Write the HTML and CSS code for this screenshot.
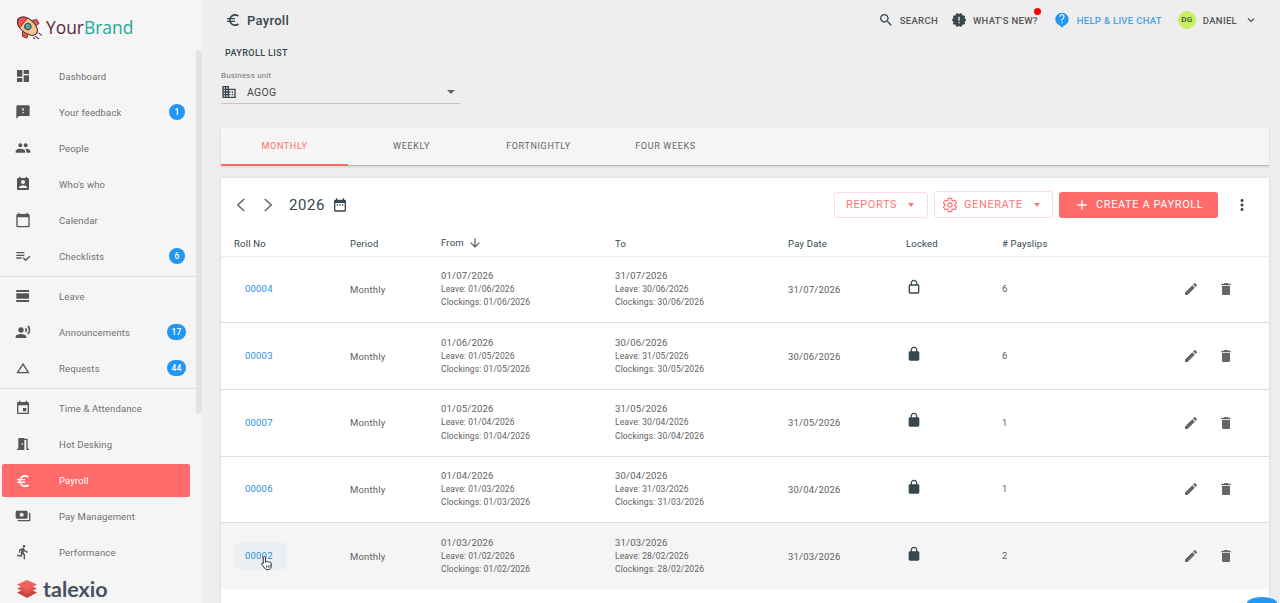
FILE: index.html
```html
<!DOCTYPE html>
<html lang="en">
<head>
    <meta charset="UTF-8">
    <meta name="viewport" content="width=device-width, initial-scale=1.0">
    <title>Payroll</title>
    <link rel="stylesheet" href="styles.css">
</head>
<body>

    <svg class="defs" xmlns="http://www.w3.org/2000/svg">
        <symbol id="i-dashboard" viewBox="0 0 24 24"><path d="M3 13h8V3H3v10zm0 8h8v-6H3v6zm10 0h8V11h-8v10zm0-18v6h8V3h-8z"/></symbol>
        <symbol id="i-feedback" viewBox="0 0 24 24"><path d="M20 2H4c-1.1 0-1.99.9-1.99 2L2 22l4-4h14c1.1 0 2-.9 2-2V4c0-1.1-.9-2-2-2zm-7 12h-2v-2h2v2zm0-4h-2V6h2v4z"/></symbol>
        <symbol id="i-people" viewBox="0 0 24 24"><path d="M16 11c1.66 0 2.99-1.34 2.99-3S17.66 5 16 5c-1.66 0-3 1.34-3 3s1.34 3 3 3zm-8 0c1.66 0 2.99-1.34 2.99-3S9.66 5 8 5C6.34 5 5 6.34 5 8s1.34 3 3 3zm0 2c-2.33 0-7 1.17-7 3.5V19h14v-2.5c0-2.33-4.67-3.5-7-3.5zm8 0c-.29 0-.62.02-.97.05 1.16.84 1.97 1.97 1.97 3.45V19h6v-2.5c0-2.33-4.67-3.5-7-3.5z"/></symbol>
        <symbol id="i-whos" viewBox="0 0 24 24"><path d="M19 3h-1V1h-2v2H8V1H6v2H5c-1.1 0-2 .9-2 2v14c0 1.1.9 2 2 2h14c1.1 0 2-.9 2-2V5c0-1.1-.9-2-2-2zm-7 3c1.66 0 3 1.34 3 3s-1.34 3-3 3-3-1.34-3-3 1.34-3 3-3zm6 12H6v-1c0-2 4-3.1 6-3.1s6 1.1 6 3.1v1z"/></symbol>
        <symbol id="i-calendar" viewBox="0 0 24 24"><path d="M20 3h-1V1h-2v2H7V1H5v2H4c-1.1 0-2 .9-2 2v16c0 1.1.9 2 2 2h16c1.1 0 2-.9 2-2V5c0-1.1-.9-2-2-2zm0 18H4V8h16v13z"/></symbol>
        <symbol id="i-checklist" viewBox="0 0 24 24"><path d="M14 10H2v2h12v-2zm0-4H2v2h12V6zM2 16h8v-2H2v2zm19.5-4.5L23 13l-6.99 7-4.51-4.5L13 14l3.01 3 5.49-5.5z"/></symbol>
        <symbol id="i-leave" viewBox="0 0 24 24"><path d="M2 21h19v-3H2v3zM20 8H3c-.55 0-1 .45-1 1v6c0 .55.45 1 1 1h17c.55 0 1-.45 1-1V9c0-.55-.45-1-1-1zM2 3v3h19V3H2z"/></symbol>
        <symbol id="i-voice" viewBox="0 0 24 24"><circle cx="9" cy="9" r="4"/><path d="M9 15c-2.67 0-8 1.34-8 4v2h16v-2c0-2.66-5.33-4-8-4zm7.76-9.64l-1.68 1.69c.84 1.18.84 2.71 0 3.89l1.68 1.69c2.02-2.02 2.02-5.07 0-7.27zM20.07 2l-1.63 1.63c2.77 3.02 2.77 7.56 0 10.74L20.07 16c3.9-3.89 3.91-9.95 0-14z"/></symbol>
        <symbol id="i-triangle" viewBox="0 0 24 24"><path d="M12 7.77L18.39 18H5.61L12 7.77M12 4L2 20h20L12 4z"/></symbol>
        <symbol id="i-event" viewBox="0 0 24 24"><path d="M17 12h-5v5h5v-5zM16 1v2H8V1H6v2H5c-1.11 0-1.99.9-1.99 2L3 19c0 1.1.89 2 2 2h14c1.1 0 2-.9 2-2V5c0-1.1-.9-2-2-2h-1V1h-2zm3 18H5V8h14v11z"/></symbol>
        <symbol id="i-door" viewBox="0 0 24 24"><path d="M14 6v15H3v-2h2V3h9v1h5v15h2v2h-4V6h-3zm-4 5v2h2v-2h-2z"/></symbol>
        <symbol id="i-euro" viewBox="0 0 24 24"><path d="M15 18.5c-2.51 0-4.68-1.42-5.76-3.5H15v-2H8.58c-.05-.33-.08-.66-.08-1s.03-.67.08-1H15V9H9.24C10.32 6.92 12.5 5.5 15 5.5c1.61 0 3.09.59 4.23 1.57L21 5.3C19.41 3.87 17.3 3 15 3c-3.92 0-7.24 2.51-8.48 6H3v2h3.06c-.04.33-.06.66-.06 1s.02.67.06 1H3v2h3.52c1.24 3.49 4.56 6 8.48 6 2.31 0 4.41-.87 6-2.3l-1.78-1.77c-1.13.98-2.6 1.57-4.22 1.57z"/></symbol>
        <symbol id="i-payments" viewBox="0 0 24 24"><path d="M19 14V6c0-1.1-.9-2-2-2H3c-1.1 0-2 .9-2 2v8c0 1.1.9 2 2 2h14c1.1 0 2-.9 2-2zm-9-1c-1.66 0-3-1.34-3-3s1.34-3 3-3 3 1.34 3 3-1.34 3-3 3zm13-6v11c0 1.1-.9 2-2 2H4v-2h17V7h2z"/></symbol>
        <symbol id="i-run" viewBox="0 0 24 24"><path d="M13.49 5.48c1.1 0 2-.9 2-2s-.9-2-2-2-2 .9-2 2 .9 2 2 2zm-3.6 13.9l1-4.4 2.1 2v6h2v-7.5l-2.1-2 .6-3c1.3 1.5 3.3 2.5 5.5 2.5v-2c-1.9 0-3.5-1-4.3-2.4l-1-1.6c-.4-.6-1-1-1.7-1-.3 0-.5.1-.8.1l-5.2 2.2v4.7h2v-3.4l1.8-.7-1.6 8.1-4.9-1-.4 2 7 1.4z"/></symbol>
        <symbol id="i-search" viewBox="0 0 24 24"><path d="M15.5 14h-.79l-.28-.27C15.41 12.59 16 11.11 16 9.5 16 5.91 13.09 3 9.5 3S3 5.91 3 9.5 5.91 16 9.5 16c1.61 0 3.09-.59 4.23-1.57l.27.28v.79l5 4.99L20.49 19l-4.99-5zm-6 0C7.01 14 5 11.99 5 9.5S7.01 5 9.5 5 14 7.01 14 9.5 11.99 14 9.5 14z"/></symbol>
        <symbol id="i-new" viewBox="0 0 24 24"><path d="M23 12l-2.44-2.78.34-3.68-3.61-.82-1.89-3.18L12 3 8.6 1.54 6.71 4.72l-3.61.81.34 3.68L1 12l2.44 2.78-.34 3.69 3.61.82 1.89 3.18L12 21l3.4 1.46 1.89-3.18 3.61-.82-.34-3.68L23 12zm-10 5h-2v-2h2v2zm0-4h-2V7h2v6z"/></symbol>
        <symbol id="i-help" viewBox="0 0 24 24"><path d="M12 1C6.48 1 2 5.48 2 11c0 4.6 3.1 8.5 7.4 9.6L12 23.5l2.6-2.9C18.900 19.500 22 15.600 22 11c0-5.520-4.480-10-10-10zm1 16h-2v-2h2v2zm2.070-7.750l-.9.920C13.450 10.900 13 11.500 13 13h-2v-.5c0-1.100.45-2.100 1.170-2.830l1.240-1.260c.37-.36.59-.86.59-1.410 0-1.100-.9-2-2-2s-2 .9-2 2H8c0-2.210 1.790-4 4-4s4 1.790 4 4c0 .88-.36 1.680-.93 2.250z"/></symbol>
        <symbol id="i-expand" viewBox="0 0 24 24"><path d="M7.41 8.59L12 13.17l4.59-4.58L18 10l-6 6-6-6z"/></symbol>
        <symbol id="i-business" viewBox="0 0 24 24"><path d="M12 7V3H2v18h20V7H12zM6 19H4v-2h2v2zm0-4H4v-2h2v2zm0-4H4V9h2v2zm0-4H4V5h2v2zm4 12H8v-2h2v2zm0-4H8v-2h2v2zm0-4H8V9h2v2zm0-4H8V5h2v2zm10 12h-8v-2h2v-2h-2v-2h2v-2h-2V9h8v10zm-2-8h-2v2h2v-2zm0 4h-2v2h2v-2z"/></symbol>
        <symbol id="i-gear" viewBox="0 0 24 24"><path fill="none" stroke="currentColor" stroke-width="1.8" d="M19.430 12.980c.04-.32.07-.64.07-.98 0-.34-.03-.66-.07-.98l2.110-1.650c.19-.15.24-.42.12-.64l-2-3.460c-.12-.22-.39-.3-.61-.22l-2.490 1c-.52-.4-1.080-.73-1.690-.98l-.38-2.650C14.460 2.180 14.250 2 14 2h-4c-.25 0-.46.18-.49.42l-.38 2.650c-.61.25-1.170.59-1.690.98l-2.490-1c-.23-.09-.49 0-.61.22l-2 3.460c-.13.22-.07.49.12.64l2.110 1.650c-.04.32-.07.65-.07.98 0 .33.03.66.07.98l-2.110 1.650c-.19.15-.24.42-.12.64l2 3.460c.12.22.39.3.61.22l2.490-1c.52.4 1.080.73 1.690.98l.38 2.650c.03.24.24.42.49.42h4c.25 0 .46-.18.49-.42l.38-2.650c.61-.25 1.170-.59 1.690-.98l2.490 1c.23.09.49 0 .61-.22l2-3.460c.12-.22.07-.49-.12-.64l-2.110-1.650z"/><circle cx="12" cy="12" r="3.200" fill="none" stroke="currentColor" stroke-width="1.800"/></symbol>
        <symbol id="i-add" viewBox="0 0 24 24"><path d="M19 13h-6v6h-2v-6H5v-2h6V5h2v6h6v2z"/></symbol>
        <symbol id="i-more" viewBox="0 0 24 24"><path d="M12 8c1.100 0 2-.9 2-2s-.9-2-2-2-2 .9-2 2 .9 2 2 2zm0 2c-1.100 0-2 .9-2 2s.9 2 2 2 2-.9 2-2-.9-2-2-2zm0 6c-1.100 0-2 .9-2 2s.9 2 2 2 2-.9 2-2-.9-2-2-2z"/></symbol>
        <symbol id="i-left" viewBox="0 0 24 24"><path d="M15.500 5.500L8.500 12l7 6.500" fill="none" stroke="currentColor" stroke-width="1.700"/></symbol>
        <symbol id="i-right" viewBox="0 0 24 24"><path d="M8.500 5.500l7 6.500-7 6.500" fill="none" stroke="currentColor" stroke-width="1.700"/></symbol>
        <symbol id="i-today" viewBox="0 0 24 24"><path d="M9 11H7v2h2v-2zm4 0h-2v2h2v-2zm4 0h-2v2h2v-2zm2-7h-1V2h-2v2H8V2H6v2H5c-1.110 0-1.990.9-1.990 2L3 20c0 1.100.89 2 2 2h14c1.100 0 2-.9 2-2V6c0-1.100-.9-2-2-2zm0 16H5V9h14v11z"/></symbol>
        <symbol id="i-down" viewBox="0 0 24 24"><path d="M20 12l-1.410-1.410L13 16.170V4h-2v12.170l-5.580-5.590L4 12l8 8 8-8z"/></symbol>
        <symbol id="i-lock" viewBox="0 0 24 24"><path d="M18 8h-1V6c0-2.760-2.240-5-5-5S7 3.240 7 6v2H6c-1.100 0-2 .9-2 2v10c0 1.100.9 2 2 2h12c1.100 0 2-.9 2-2V10c0-1.100-.9-2-2-2zm-2.900 0H8.900V6c0-1.710 1.390-3.100 3.100-3.100 1.710 0 3.100 1.390 3.100 3.100v2z"/></symbol>
        <symbol id="i-lock-open" viewBox="0 0 24 24"><path d="M18 8h-1V6c0-2.760-2.240-5-5-5S7 3.240 7 6v2H6c-1.100 0-2 .9-2 2v10c0 1.100.9 2 2 2h12c1.100 0 2-.9 2-2V10c0-1.100-.9-2-2-2zM8.900 6c0-1.710 1.390-3.100 3.100-3.100s3.100 1.390 3.100 3.100v2H8.900V6zM18 20H6V10h12v10z"/></symbol>
        <symbol id="i-edit" viewBox="0 0 24 24"><path d="M3 17.250V21h3.750L17.810 9.940l-3.750-3.750L3 17.250zM20.710 7.040c.39-.39.39-1.020 0-1.410l-2.340-2.340c-.39-.39-1.020-.39-1.410 0l-1.830 1.830 3.750 3.750 1.830-1.830z"/></symbol>
        <symbol id="i-delete" viewBox="0 0 24 24"><path d="M6 19c0 1.100.9 2 2 2h8c1.100 0 2-.9 2-2V7H6v12zM19 4h-3.500l-1-1h-5l-1 1H5v2h14V4z"/></symbol>
    </svg>

    <div class="app">
        <aside class="sidebar">
            <div class="brand">
                <svg class="rocket" viewBox="1 0 25 21.500">
                    <g transform="rotate(40 13 10)">
                        <path d="M12 4.500L15.500 0l4 1.500-1.500 4zM12 15.500l3.500 4.500 4-1.500-1.500-4z" fill="#e9574f" stroke="#5b2a3c" stroke-width=".7"/>
                        <ellipse cx="13" cy="10" rx="10.500" ry="6.200" fill="#f3c58e" stroke="#5b2a3c" stroke-width=".9"/>
                        <path d="M2.500 10C3.500 6.800 6 4.900 8.500 4.300v11.400C6 15.100 3.500 13.200 2.500 10z" fill="#e9574f" stroke="#5b2a3c" stroke-width=".7"/>
                        <circle cx="13.500" cy="10" r="2.800" fill="#3fb2a8" stroke="#5b2a3c" stroke-width=".9"/>
                    </g>
                    <path d="M20 19l4 3M23 16l3 2.500M18 20l2 1.500" stroke="#5b2a3c" stroke-width=".9"/>
                </svg>
                <span class="brand-name">Your<b>Brand</b></span>
            </div>

            <nav class="nav">
                <div class="nav-group">
                    <a class="nav-item"><svg class="nav-icon"><use href="#i-dashboard"/></svg><span>Dashboard</span></a>
                    <a class="nav-item"><svg class="nav-icon"><use href="#i-feedback"/></svg><span>Your feedback</span><em class="count">1</em></a>
                    <a class="nav-item"><svg class="nav-icon"><use href="#i-people"/></svg><span>People</span></a>
                    <a class="nav-item"><svg class="nav-icon"><use href="#i-whos"/></svg><span>Who's who</span></a>
                    <a class="nav-item"><svg class="nav-icon"><use href="#i-calendar"/></svg><span>Calendar</span></a>
                    <a class="nav-item"><svg class="nav-icon"><use href="#i-checklist"/></svg><span>Checklists</span><em class="count">6</em></a>
                </div>
                <div class="nav-group">
                    <a class="nav-item"><svg class="nav-icon"><use href="#i-leave"/></svg><span>Leave</span></a>
                    <a class="nav-item"><svg class="nav-icon"><use href="#i-voice"/></svg><span>Announcements</span><em class="count wide">17</em></a>
                    <a class="nav-item"><svg class="nav-icon"><use href="#i-triangle"/></svg><span>Requests</span><em class="count wide">44</em></a>
                </div>
                <div class="nav-group last">
                    <a class="nav-item"><svg class="nav-icon"><use href="#i-event"/></svg><span>Time &amp; Attendance</span></a>
                    <a class="nav-item"><svg class="nav-icon"><use href="#i-door"/></svg><span>Hot Desking</span></a>
                    <a class="nav-item active"><svg class="nav-icon"><use href="#i-euro"/></svg><span>Payroll</span></a>
                    <a class="nav-item"><svg class="nav-icon"><use href="#i-payments"/></svg><span>Pay Management</span></a>
                    <a class="nav-item"><svg class="nav-icon"><use href="#i-run"/></svg><span>Performance</span></a>
                </div>
            </nav>

            <div class="talexio">
                <svg class="talexio-mark" viewBox="0 0 20 18">
                    <path d="M10 8l10 4.500L10 18 0 12.500z" fill="#c9433f"/>
                    <path d="M10 4l10 4.500L10 14 0 8.500z" fill="#e2544f"/>
                    <path d="M10 0l10 4.500L10 10 0 4.500z" fill="#f0625d"/>
                </svg>
                <span>talexio</span>
            </div>
            <div class="nav-scrollbar"></div>
        </aside>

        <main class="main">
            <header class="topbar">
                <div class="page-title">
                    <svg class="title-icon"><use href="#i-euro"/></svg>
                    <h1>Payroll</h1>
                </div>
                <div class="top-actions">
                    <a class="top-link search"><svg><use href="#i-search"/></svg>SEARCH</a>
                    <a class="top-link news"><svg><use href="#i-new"/></svg>WHAT'S NEW?<i class="red-dot"></i></a>
                    <a class="top-link help"><svg><use href="#i-help"/></svg>HELP &amp; LIVE CHAT</a>
                    <a class="top-link user"><b class="avatar">DG</b>DANIEL<svg class="chev"><use href="#i-expand"/></svg></a>
                </div>
            </header>

            <h2 class="section-title">PAYROLL LIST</h2>

            <div class="select-field">
                <label>Business unit</label>
                <div class="select-box">
                    <svg><use href="#i-business"/></svg>
                    <span>AGOG</span>
                    <i class="caret"></i>
                </div>
            </div>

            <div class="tabs">
                <a class="tab active">MONTHLY</a>
                <a class="tab">WEEKLY</a>
                <a class="tab">FORTNIGHTLY</a>
                <a class="tab">FOUR WEEKS</a>
            </div>

            <section class="card">
                <div class="toolbar">
                    <div class="year-nav">
                        <svg class="arrow"><use href="#i-left"/></svg>
                        <svg class="arrow"><use href="#i-right"/></svg>
                        <span class="year">2026</span>
                        <svg class="year-cal"><use href="#i-today"/></svg>
                    </div>
                    <div class="toolbar-actions">
                        <button class="btn outline">REPORTS<i class="caret"></i></button>
                        <button class="btn outline gen"><svg><use href="#i-gear"/></svg>GENERATE<i class="caret"></i></button>
                        <button class="btn primary"><svg><use href="#i-add"/></svg>CREATE A PAYROLL</button>
                        <svg class="more"><use href="#i-more"/></svg>
                    </div>
                </div>

                <table class="payroll">
                    <colgroup>
                        <col class="c-roll"><col class="c-period"><col class="c-date"><col class="c-date2"><col class="c-pay"><col class="c-lock"><col class="c-slips">
                    </colgroup>
                    <thead>
                        <tr>
                            <th>Roll No</th>
                            <th>Period</th>
                            <th>From <svg class="sort"><use href="#i-down"/></svg></th>
                            <th>To</th>
                            <th>Pay Date</th>
                            <th>Locked</th>
                            <th># Payslips</th>
                        </tr>
                    </thead>
                    <tbody>
                        <tr>
                            <td><a class="roll">00004</a></td>
                            <td>Monthly</td>
                            <td><div>01/07/2026</div><small>Leave: 01/06/2026</small><small>Clockings: 01/06/2026</small></td>
                            <td><div>31/07/2026</div><small>Leave: 30/06/2026</small><small>Clockings: 30/06/2026</small></td>
                            <td>31/07/2026</td>
                            <td><svg class="lock"><use href="#i-lock-open"/></svg></td>
                            <td><div class="slips"><span>6</span><span class="row-actions"><svg><use href="#i-edit"/></svg><svg><use href="#i-delete"/></svg></span></div></td>
                        </tr>
                        <tr>
                            <td><a class="roll">00003</a></td>
                            <td>Monthly</td>
                            <td><div>01/06/2026</div><small>Leave: 01/05/2026</small><small>Clockings: 01/05/2026</small></td>
                            <td><div>30/06/2026</div><small>Leave: 31/05/2026</small><small>Clockings: 30/05/2026</small></td>
                            <td>30/06/2026</td>
                            <td><svg class="lock"><use href="#i-lock"/></svg></td>
                            <td><div class="slips"><span>6</span><span class="row-actions"><svg><use href="#i-edit"/></svg><svg><use href="#i-delete"/></svg></span></div></td>
                        </tr>
                        <tr>
                            <td><a class="roll">00007</a></td>
                            <td>Monthly</td>
                            <td><div>01/05/2026</div><small>Leave: 01/04/2026</small><small>Clockings: 01/04/2026</small></td>
                            <td><div>31/05/2026</div><small>Leave: 30/04/2026</small><small>Clockings: 30/04/2026</small></td>
                            <td>31/05/2026</td>
                            <td><svg class="lock"><use href="#i-lock"/></svg></td>
                            <td><div class="slips"><span>1</span><span class="row-actions"><svg><use href="#i-edit"/></svg><svg><use href="#i-delete"/></svg></span></div></td>
                        </tr>
                        <tr>
                            <td><a class="roll">00006</a></td>
                            <td>Monthly</td>
                            <td><div>01/04/2026</div><small>Leave: 01/03/2026</small><small>Clockings: 01/03/2026</small></td>
                            <td><div>30/04/2026</div><small>Leave: 31/03/2026</small><small>Clockings: 31/03/2026</small></td>
                            <td>30/04/2026</td>
                            <td><svg class="lock"><use href="#i-lock"/></svg></td>
                            <td><div class="slips"><span>1</span><span class="row-actions"><svg><use href="#i-edit"/></svg><svg><use href="#i-delete"/></svg></span></div></td>
                        </tr>
                        <tr class="hover">
                            <td>
                                <a class="roll">00002
                                    <svg class="cursor" viewBox="0 0 16 18"><path d="M5 1.500c.8 0 1.300.6 1.300 1.300V8l1-.2c.5-.9 1.700-.7 2 .1.600-.6 1.600-.3 1.800.4.700-.4 1.700 0 1.700 1V13c0 2-1.300 3.500-3.300 3.500H8C6.500 16.500 5.800 15.700 5 14.500L2 10.500c-.5-.8.500-1.800 1.400-1.100l.3.3V2.800c0-.7.500-1.300 1.300-1.300z" fill="#fff" stroke="#222" stroke-width="1.100"/><path d="M7.500 11.500v3M9.500 11.500v3M11.500 11.500v3" stroke="#222" stroke-width=".8"/></svg>
                                </a>
                            </td>
                            <td>Monthly</td>
                            <td><div>01/03/2026</div><small>Leave: 01/02/2026</small><small>Clockings: 01/02/2026</small></td>
                            <td><div>31/03/2026</div><small>Leave: 28/02/2026</small><small>Clockings: 28/02/2026</small></td>
                            <td>31/03/2026</td>
                            <td><svg class="lock"><use href="#i-lock"/></svg></td>
                            <td><div class="slips"><span>2</span><span class="row-actions"><svg><use href="#i-edit"/></svg><svg><use href="#i-delete"/></svg></span></div></td>
                        </tr>
                    </tbody>
                </table>
            </section>
        </main>
    </div>

    <div class="fab"></div>

</body>
</html>
```

FILE: styles.css
```css
* {
    box-sizing: border-box;
}
html, body {
    height: 100%;
    margin: 0;
    overflow: hidden;
}
body {
    font-family: Roboto, "Liberation Sans", sans-serif;
    background-color: #eeeeee;
    color: #555;
}
.defs {
    display: none;
}
svg {
    fill: currentColor;
    display: block;
}
.app {
    display: flex;
    height: 603px;
    overflow: hidden;
}

/* sidebar */
.sidebar {
    position: relative;
    width: 202px;
    flex: none;
    background-color: #f5f5f5;
    display: flex;
    flex-direction: column;
}
.brand {
    height: 58px;
    padding: 15px 0 0 14px;
    display: flex;
    align-items: flex-start;
    gap: 4px;
}
.rocket {
    width: 28px;
    height: 24px;
    flex: none;
}
.brand-name {
    font-family: "Open Sans", sans-serif;
    font-size: 17.4px;
    line-height: 24px;
    color: #5b2a3c;
}
.brand-name b {
    font-weight: 400;
    color: #1fa79b;
}
.nav {
    flex: 1;
    width: 196px;
}
.nav-group {
    padding-bottom: 2px;
    margin-bottom: 1px;
    border-bottom: 1px solid #dcdcdc;
}
.nav-group.last {
    border-bottom: none;
}
.nav-item {
    height: 36px;
    display: flex;
    align-items: center;
    padding: 0 10px 0 15px;
    font-size: 9.5px;
    letter-spacing: 0.15px;
    color: #707070;
    position: relative;
}
.nav-icon {
    width: 16px;
    height: 16px;
    margin-right: 28px;
    color: #555;
    flex: none;
}
.count {
    position: absolute;
    right: 11px;
    top: 10px;
    width: 16px;
    height: 16px;
    border-radius: 8px;
    background-color: #2196f3;
    color: #fff;
    font-style: normal;
    font-size: 8.5px;
    font-weight: 500;
    line-height: 16px;
    text-align: center;
}
.count.wide {
    width: 19px;
    right: 10px;
}
.nav-item.active {
    background-color: #ff6b6b;
    color: #fff;
    width: 188px;
    height: 33px;
    margin: 2px 0 1px 2px;
    padding-left: 13px;
    border-radius: 2px;
}
.nav-item.active .nav-icon {
    color: #fff;
}
.talexio {
    height: 28px;
    padding-left: 17px;
    display: flex;
    align-items: center;
    gap: 6px;
    font-size: 21.5px;
    font-weight: 700;
    color: #46525f;
    font-family: Lato, sans-serif;
}
.talexio-mark {
    width: 20px;
    height: 18px;
}
.nav-scrollbar {
    position: absolute;
    left: 196px;
    top: 50px;
    width: 6px;
    height: 364px;
    background-color: #e3e3e3;
    border-radius: 3px;
}

/* main column */
.main {
    flex: 1;
    min-width: 0;
    padding: 0 11px 0 19px;
}
.topbar {
    height: 40px;
    display: flex;
    align-items: center;
    justify-content: space-between;
}
.page-title {
    display: flex;
    align-items: center;
    padding-left: 4px;
    color: #37474f;
}
.title-icon {
    width: 16px;
    height: 16px;
    margin-right: 6px;
}
.page-title h1 {
    font-size: 13px;
    font-weight: 500;
    margin: 0;
    letter-spacing: 0.3px;
}
.top-actions {
    display: flex;
    align-items: center;
    margin-right: 11px;
}
.top-link {
    display: flex;
    align-items: center;
    position: relative;
    font-size: 9.5px;
    font-weight: 500;
    letter-spacing: 0.3px;
    color: #555;
}
.top-link svg {
    width: 16px;
    height: 16px;
    margin-right: 6px;
}
.search {
    margin-right: 13px;
    color: #555;
}
.search svg {
    color: #37474f;
}
.news {
    margin-right: 16px;
}
.news svg {
    color: #37474f;
}
.help {
    color: #4a9fe8;
    margin-right: 16px;
}
.help svg {
    color: #2196f3;
    margin-right: 7px;
}
.avatar {
    width: 18px;
    height: 18px;
    border-radius: 50%;
    background-color: #c6f05c;
    color: #37474f;
    font-size: 8px;
    font-weight: 500;
    line-height: 18px;
    text-align: center;
    margin-right: 7px;
}
.top-link .chev {
    width: 14px;
    height: 14px;
    margin: 0 0 0 7px;
    color: #37474f;
}
.red-dot {
    position: absolute;
    right: -3px;
    top: -4px;
    width: 7px;
    height: 7px;
    border-radius: 50%;
    background-color: #f00;
}
.section-title {
    margin: 7px 0 0 4px;
    font-size: 9px;
    line-height: 12px;
    font-weight: 500;
    letter-spacing: 0.4px;
    color: #37474f;
}
.select-field {
    width: 239px;
    margin-top: 12px;
    height: 33px;
    border-bottom: 1px solid #c4c4c4;
}
.select-field label {
    display: block;
    font-size: 8px;
    line-height: 10px;
    letter-spacing: 0.2px;
    color: #777;
}
.select-box {
    display: flex;
    align-items: center;
    height: 22px;
    padding: 0 5px 0 0;
    font-size: 10.5px;
    letter-spacing: 0.3px;
    color: #444;
}
.select-box svg {
    width: 16px;
    height: 16px;
    margin-right: 10px;
    color: #37474f;
}
.select-box span {
    flex: 1;
}
.caret {
    display: inline-block;
    border-left: 3.5px solid transparent;
    border-right: 3.5px solid transparent;
    border-top: 4px solid currentColor;
}
.select-box .caret {
    color: #666;
    border-left-width: 4.5px;
    border-right-width: 4.5px;
}

/* tabs */
.tabs {
    display: flex;
    margin-top: 23px;
    height: 39px;
    background-color: #f5f5f5;
    border-bottom: 1px solid #bbb;
    box-shadow: 0 1px 2px rgba(0, 0, 0, 0.12);
}
.tab {
    width: 127px;
    display: flex;
    align-items: center;
    justify-content: center;
    font-size: 9px;
    font-weight: 400;
    letter-spacing: 0.65px;
    color: #666;
}
.tab.active {
    color: #ff6b6b;
    border-bottom: 2px solid #ff6b6b;
    height: 39px;
}

/* card */
.card {
    margin-top: 12px;
    background-color: #fff;
    height: 425px;
    overflow: hidden;
    box-shadow: 0 0 3px rgba(0, 0, 0, 0.12);
}
.toolbar {
    height: 53px;
    display: flex;
    align-items: center;
    justify-content: space-between;
    padding: 0 22px 0 9px;
}
.year-nav {
    display: flex;
    align-items: center;
    color: #37474f;
}
.arrow {
    width: 22px;
    height: 22px;
    margin-right: 5px;
    color: #666;
}
.year {
    font-size: 15px;
    font-weight: 400;
    letter-spacing: 0.6px;
    margin: 0 7px 0 5px;
}
.year-cal {
    width: 16px;
    height: 16px;
}
.toolbar-actions {
    display: flex;
    align-items: center;
    gap: 6px;
}
.btn {
    font-family: inherit;
    display: flex;
    align-items: center;
    justify-content: flex-start;
    height: 26px;
    font-size: 11px;
    font-weight: 400;
    letter-spacing: 0.6px;
    border-radius: 3px;
    padding: 0 0 0 11px;
    cursor: pointer;
}
.btn.outline {
    width: 94px;
    background: #fff;
    color: #ff7575;
    border: 1px solid #fbdcdc;
}
.btn .caret {
    margin-left: 11px;
}
.btn.gen {
    width: 119px;
    height: 27px;
    padding-left: 7px;
}
.btn.gen svg {
    width: 16px;
    height: 16px;
    margin-right: 6px;
}
.btn.primary {
    width: 159px;
    background-color: #ff6b6b;
    color: #fff;
    border: none;
    padding-left: 15px;
}
.btn.primary svg {
    width: 16px;
    height: 16px;
    margin-right: 6px;
}
.more {
    width: 18px;
    height: 18px;
    margin-left: 9px;
    color: #37474f;
    margin-right: -4px;
}

/* table */
.payroll {
    width: 100%;
    table-layout: fixed;
    border-collapse: collapse;
}
.c-roll { width: 116px; }
.c-period { width: 91px; }
.c-date { width: 174px; }
.c-date2 { width: 173px; }
.c-pay { width: 118px; }
.c-lock { width: 96px; }
.payroll th {
    height: 25px;
    padding: 0 0 0 13px;
    text-align: left;
    font-size: 9.5px;
    font-weight: 400;
    letter-spacing: 0.2px;
    color: #37474f;
    border-bottom: 1px solid #eee;
}
.sort {
    display: inline-block;
    width: 14px;
    height: 14px;
    vertical-align: middle;
    margin-left: 2px;
    color: #555;
}
.payroll td {
    height: 66.7px;
    padding: 0 0 0 13px;
    font-size: 9.5px;
    letter-spacing: 0.2px;
    color: #5e5e5e;
    border-bottom: 1px solid #ddd;
    vertical-align: middle;
}
.payroll td div {
    line-height: 14px;
}
.payroll td small {
    display: block;
    font-size: 8.5px;
    line-height: 13.5px;
    letter-spacing: 0.12px;
}
.payroll tr.hover td {
    background-color: #f5f5f5;
    border-bottom: none;
}
.roll {
    position: relative;
    display: inline-block;
    padding: 0 14px 0 11px;
    line-height: 26px;
    color: #2b8fe0;
}
.hover .roll {
    background-color: #e9eff3;
}
.cursor {
    position: absolute;
    left: 26px;
    top: 12px;
    width: 14px;
    height: 16px;
}
.lock {
    width: 16px;
    height: 16px;
    color: #37474f;
    margin-top: -5px;
}
.payroll td .slips {
    display: flex;
    align-items: center;
    justify-content: space-between;
    padding-right: 35px;
}
.row-actions {
    display: flex;
    gap: 19px;
    color: #666;
}
.row-actions svg {
    width: 16px;
    height: 16px;
}

.fab {
    position: absolute;
    left: 1247px;
    top: 597px;
    width: 30px;
    height: 6px;
    border-radius: 15px 15px 0 0 / 6px 6px 0 0;
    background-color: #2196f3;
}
```
